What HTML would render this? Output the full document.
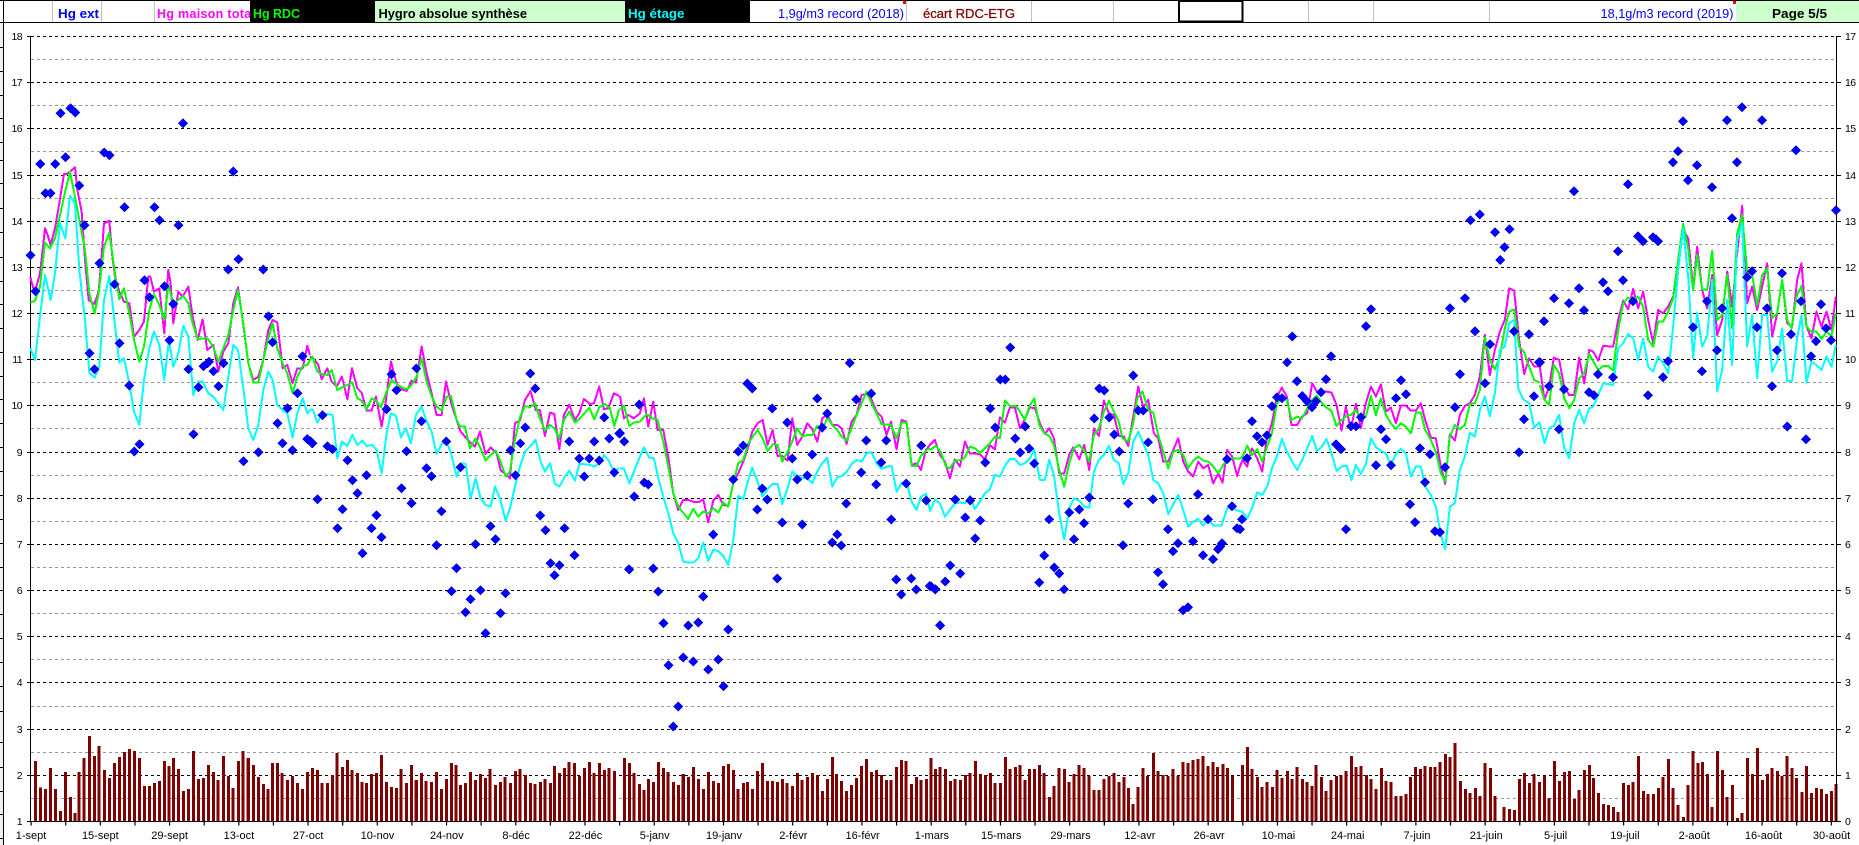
<!DOCTYPE html>
<html lang="fr"><head><meta charset="utf-8"><title>Hygro absolue synthèse</title>
<style>
html,body{margin:0;padding:0;background:#fff;overflow:hidden}
svg{display:block;position:absolute;left:0;top:0}
text{font-family:"Liberation Sans",Arial,sans-serif}
.h{font-size:12.5px;font-weight:bold}
.y{font-size:10.5px;letter-spacing:-.6px;fill:#000}
.x{font-size:11px;fill:#000;text-anchor:middle}
.m{fill:none;stroke:#f0f;stroke-width:6;stroke-linejoin:round}
.g{fill:none;stroke:#0f0;stroke-width:6;stroke-linejoin:round}
.c{fill:none;stroke:#0ff;stroke-width:6;stroke-linejoin:round}
.d{fill:none;stroke:none;marker-start:url(#dm);marker-mid:url(#dm);marker-end:url(#dm)}
</style></head><body>
<svg width="1859" height="845" viewBox="0 0 1859 845" xmlns="http://www.w3.org/2000/svg">
<defs><marker id="dm" markerUnits="userSpaceOnUse" markerWidth="34" markerHeight="34" refX="17" refY="17" orient="0"><polygon points="17,2 32,17 17,32 2,17" fill="#0000f5" shape-rendering="crispEdges"/></marker></defs>
<rect width="1859" height="845" fill="#fff"/>
<!-- left strip -->
<rect x="0" y="23" width="3" height="822" fill="#f0f0f0"/>
<path shape-rendering="crispEdges" stroke="#000" fill="none" d="M3.5 0V845M0 47.5H3M0 71.5H3M0 95.5H3M0 118.5H3M0 142.5H3M0 160.5H3M0 183.5H3M0 208.5H3M0 232.5H3M0 257.5H3M0 281.5H3M0 304.5H3M0 328.5H3M0 352.5H3M0 376.5H3M0 399.5H3M0 423.5H3M0 447.5H3M0 471.5H3M0 495.5H3M0 519.5H3M0 543.5H3M0 567.5H3M0 590.5H3M0 614.5H3M0 638.5H3M0 662.5H3M0 686.5H3M0 711.5H3M0 742.5H3M0 767.5H3M0 791.5H3M0 814.5H3M0 838.5H3"/>
<!-- header -->
<path shape-rendering="crispEdges" stroke="#c0c0c0" fill="none" d="M52.5 0V22M101.5 0V22M154.5 0V22M906.5 0V22M1031.5 0V22M1113.5 0V22M1308.5 0V22M1373.5 0V22M1489.5 0V22"/>
<text class="h" x="58" y="18" fill="#0000ff" textLength="41" lengthAdjust="spacingAndGlyphs">Hg ext</text>
<text class="h" x="157" y="18" fill="#ff00ff" style="letter-spacing:.3px">Hg maison totale</text>
<rect x="250" y="0" width="125" height="22" fill="#000"/>
<rect x="375" y="0" width="250" height="22" fill="#ccffcc"/>
<rect x="625" y="0" width="125" height="22" fill="#000"/>
<rect x="1736" y="0" width="123" height="22" fill="#ccffcc"/>
<text class="h" x="253" y="18" fill="#00ff00" textLength="47" lengthAdjust="spacingAndGlyphs">Hg RDC</text>
<text class="h" x="378.5" y="18" fill="#000" textLength="148.5" lengthAdjust="spacingAndGlyphs">Hygro absolue synthèse</text>
<text class="h" x="628" y="18" fill="#00ffff" textLength="56.5" lengthAdjust="spacingAndGlyphs">Hg étage</text>
<text x="778" y="18" font-size="12.5" fill="#0000ff" textLength="126" lengthAdjust="spacingAndGlyphs">1,9g/m3 record (2018)</text>
<text x="923" y="18" font-size="12.5" fill="#800000" textLength="92" lengthAdjust="spacingAndGlyphs" style="stroke:#800000;stroke-width:.25">écart RDC-ETG</text>
<text x="1600.5" y="18" font-size="12.5" fill="#0000ff" textLength="133" lengthAdjust="spacingAndGlyphs">18,1g/m3 record (2019)</text>
<text class="h" x="1772" y="18" fill="#000" textLength="55" lengthAdjust="spacingAndGlyphs">Page 5/5</text>
<rect x="903" y="0" width="3" height="4" fill="#ff0000"/>
<rect x="1733" y="0" width="3" height="4" fill="#ff0000"/>
<path shape-rendering="crispEdges" stroke="#000" fill="none" d="M0 .5H1859M0 22.5H1859"/>
<rect x="1179" y="1" width="63.5" height="20.5" fill="#fff" stroke="#000" stroke-width="2" shape-rendering="crispEdges"/>
<!-- grid -->
<path shape-rendering="crispEdges" stroke="#999" fill="none" stroke-dasharray="3 3" d="M31 59.5H1836M31 105.5H1836M31 151.5H1836M31 198.5H1836M31 244.5H1836M31 290.5H1836M31 336.5H1836M31 382.5H1836M31 428.5H1836M31 475.5H1836M31 521.5H1836M31 567.5H1836M31 613.5H1836M31 659.5H1836M31 706.5H1836M31 752.5H1836M31 798.5H1836"/>
<path shape-rendering="crispEdges" stroke="#000" fill="none" stroke-dasharray="3 3" d="M31 36.5H1836M31 82.5H1836M31 128.5H1836M31 175.5H1836M31 221.5H1836M31 267.5H1836M31 313.5H1836M31 359.5H1836M31 405.5H1836M31 452.5H1836M31 498.5H1836M31 544.5H1836M31 590.5H1836M31 636.5H1836M31 682.5H1836M31 729.5H1836M31 775.5H1836"/>
<!-- bars -->
<g fill="none" stroke="#800000" shape-rendering="crispEdges">
<path transform="translate(0,700) scale(.3953,.3333)" stroke-width="7.6" d="M90 183V364M103 262V364M115 267V364M128 204V364M141 267V364M153 333V364M166 216V364M178 291V364M190 339V364M200 216V364M213 174V364M226 108V364M239 168V364M251 138V364M264 210V364M277 234V364M290 189V364M302 171V364M315 156V364M327 147V364M340 153V364M353 174V364M365 258V364M378 258V364M391 249V364M403 243V364M416 183V364M428 198V364M439 174V364M452 207V364M464 273V364M477 267V364M489 153V364M502 237V364M515 234V364M527 195V364M540 216V364M552 240V364M565 168V364M578 228V364M590 264V364M603 183V364M615 153V364M628 174V364M641 195V364M654 231V364M666 252V364M678 267V364M689 189V364M702 189V364M714 219V364M727 240V364M740 228V364M752 249V364M765 267V364M778 216V364M790 204V364M803 210V364M815 249V364M828 249V364M841 225V364M853 159V364M866 201V364M879 180V364M891 210V364M904 219V364M916 246V364M927 249V364M940 222V364M952 219V364M965 165V364M978 246V364M990 261V364M1003 264V364M1015 207V364M1028 249V364M1041 195V364M1053 240V364M1066 219V364M1078 243V364M1091 246V364M1104 216V364M1117 267V364M1129 237V364M1142 189V364M1153 195V364M1165 255V364M1177 249V364M1190 216V364M1203 240V364M1215 222V364M1228 234V364M1240 207V364M1253 255V364M1266 246V364M1278 231V364M1291 249V364M1304 213V364M1316 207V364M1329 225V364M1342 249V364M1354 252V364M1367 246V364M1379 237V364M1392 249V364M1403 198V364M1416 219V364M1428 204V364M1440 186V364M1453 189V364M1466 228V364M1478 204V364M1491 186V364M1503 219V364M1516 189V364M1529 210V364M1541 204V364M1554 213V364"/>
<path transform="translate(620,700) scale(.3953,.3333)" stroke-width="7.6" d="M12 174V364M24 189V364M36 219V364M49 252V364M61 270V364M72 237V364M85 246V364M97 186V364M110 204V364M122 216V364M135 246V364M148 255V364M160 222V364M173 231V364M186 201V364M198 237V364M211 267V364M224 216V364M236 243V364M249 249V364M262 198V364M274 192V364M287 210V364M299 267V364M312 249V364M322 246V364M335 267V364M348 213V364M360 189V364M373 243V364M386 243V364M398 246V364M411 237V364M423 249V364M436 258V364M449 219V364M461 240V364M474 231V364M487 219V364M499 225V364M512 273V364M525 237V364M537 171V364M548 222V364M560 243V364M573 273V364M586 255V364M598 234V364M611 198V364M623 177V364M636 216V364M649 210V364M661 225V364M674 240V364M686 240V364M699 201V364M712 180V364M724 183V364M737 252V364M750 231V364M762 240V364M775 237V364M787 174V364M798 207V364M810 201V364M823 207V364M836 243V364M848 237V364M861 240V364M874 225V364M886 219V364M899 183V364M912 222V364M924 225V364M937 219V364M949 249V364M962 249V364M975 171V364M987 207V364M1000 201V364M1012 195V364M1024 240V364M1036 207V364M1048 207V364M1061 195V364M1073 219V364M1086 291V364M1098 258V364M1111 204V364M1124 207V364M1136 246V364M1149 222V364M1161 195V364M1174 204V364M1187 228V364M1199 270V364M1212 270V364M1225 237V364M1237 228V364M1250 219V364M1262 246V364M1275 231V364M1286 264V364M1298 312V364M1311 261V364M1323 204V364M1335 228V364M1349 159V364M1361 213V364M1374 225V364M1386 228V364M1399 207V364M1412 228V364M1424 186V364M1437 189V364M1450 180V364M1462 177V364M1475 168V364M1488 198V364M1500 186V364M1512 201V364M1525 192V364M1537 204V364M1549 228V364"/>
<path transform="translate(1240,700) scale(.3948,.3333)" stroke-width="7.6" d="M6 195V364M19 141V364M31 207V364M44 231V364M56 261V364M69 246V364M82 261V364M94 210V364M107 234V364M120 213V364M132 237V364M145 201V364M158 237V364M170 246V364M183 258V364M193 195V364M206 231V364M218 273V364M231 240V364M244 228V364M256 225V364M269 213V364M282 168V364M294 201V364M307 198V364M320 225V364M332 237V364M345 267V364M358 204V364M370 243V364M383 246V364M395 288V364M408 288V364M420 282V364M432 231V364M444 201V364M457 207V364M469 198V364M482 201V364M494 201V364M507 186V364M520 162V364M532 171V364M545 129V364M558 243V364M571 267V364M583 279V364M596 264V364M608 288V364M621 189V364M634 204V364M646 288V364M669 321V364M682 327V364M695 330V364M708 237V364M720 219V364M733 249V364M745 222V364M758 246V364M771 228V364M783 294V364M796 183V364M809 243V364M822 216V364M834 213V364M847 297V364M859 270V364M872 210V364M885 195V364M896 234V364M908 279V364M921 312V364M933 315V364M946 321V364M958 336V364M971 249V364M984 255V364M996 246V364M1009 168V364M1022 273V364M1034 282V364M1047 282V364M1060 264V364M1072 231V364M1085 177V364M1097 264V364M1110 315V364M1123 351V364M1135 255V364M1147 153V364M1160 189V364M1172 186V364M1184 222V364M1196 321V364M1209 153V364M1222 210V364M1234 291V364M1247 255V364M1260 354V364M1272 339V364M1285 174V364M1298 222V364M1311 144V364M1323 240V364M1336 222V364M1348 204V364M1361 213V364M1373 228V364M1386 168V364M1398 204V364M1410 234V364M1423 276V364M1435 198V364M1447 279V364M1460 264V364M1473 267V364M1485 282V364M1498 273V364M1510 252V364"/>
</g>
<!-- axes -->
<path shape-rendering="crispEdges" stroke="#000" fill="none" d="M30.5 36V822M1836.5 36V822M30 821.5H1837M27 36.5H31M27 82.5H31M27 128.5H31M27 175.5H31M27 221.5H31M27 267.5H31M27 313.5H31M27 359.5H31M27 405.5H31M27 452.5H31M27 498.5H31M27 544.5H31M27 590.5H31M27 636.5H31M27 682.5H31M27 729.5H31M27 775.5H31M27 821.5H31M1836 36.5H1841M1836 82.5H1841M1836 128.5H1841M1836 175.5H1841M1836 221.5H1841M1836 267.5H1841M1836 313.5H1841M1836 359.5H1841M1836 405.5H1841M1836 452.5H1841M1836 498.5H1841M1836 544.5H1841M1836 590.5H1841M1836 636.5H1841M1836 682.5H1841M1836 729.5H1841M1836 775.5H1841M1836 821.5H1841"/>
<path stroke="#000" fill="none" stroke-width="4" stroke-dasharray="1.2 33.42" d="M30.5 823.5H1837"/>
<!-- left labels -->
<g>
<text class="y" x="22" y="40" text-anchor="end">18</text><text class="y" x="22" y="86" text-anchor="end">17</text><text class="y" x="22" y="132" text-anchor="end">16</text><text class="y" x="22" y="179" text-anchor="end">15</text><text class="y" x="22" y="225" text-anchor="end">14</text><text class="y" x="22" y="271" text-anchor="end">13</text><text class="y" x="22" y="317" text-anchor="end">12</text><text class="y" x="22" y="363" text-anchor="end">11</text><text class="y" x="22" y="409" text-anchor="end">10</text><text class="y" x="22" y="456" text-anchor="end">9</text><text class="y" x="22" y="502" text-anchor="end">8</text><text class="y" x="22" y="548" text-anchor="end">7</text><text class="y" x="22" y="594" text-anchor="end">6</text><text class="y" x="22" y="640" text-anchor="end">5</text><text class="y" x="22" y="686" text-anchor="end">4</text><text class="y" x="22" y="733" text-anchor="end">3</text><text class="y" x="22" y="779" text-anchor="end">2</text><text class="y" x="22" y="825" text-anchor="end">1</text>
</g>
<!-- right labels -->
<g>
<text class="y" x="1845" y="40">17</text><text class="y" x="1845" y="86">16</text><text class="y" x="1845" y="132">15</text><text class="y" x="1845" y="179">14</text><text class="y" x="1845" y="225">13</text><text class="y" x="1845" y="271">12</text><text class="y" x="1845" y="317">11</text><text class="y" x="1845" y="363">10</text><text class="y" x="1845" y="409">9</text><text class="y" x="1845" y="456">8</text><text class="y" x="1845" y="502">7</text><text class="y" x="1845" y="548">6</text><text class="y" x="1845" y="594">5</text><text class="y" x="1845" y="640">4</text><text class="y" x="1845" y="686">3</text><text class="y" x="1845" y="733">2</text><text class="y" x="1845" y="779">1</text><text class="y" x="1845" y="825">0</text>
</g>
<!-- x labels -->
<g>
<text class="x" x="31" y="839">1-sept</text><text class="x" x="100.3" y="839">15-sept</text><text class="x" x="169.6" y="839">29-sept</text><text class="x" x="238.9" y="839">13-oct</text><text class="x" x="308.2" y="839">27-oct</text><text class="x" x="377.5" y="839">10-nov</text><text class="x" x="446.8" y="839">24-nov</text><text class="x" x="516.1" y="839">8-déc</text><text class="x" x="585.4" y="839">22-déc</text><text class="x" x="654.7" y="839">5-janv</text><text class="x" x="724" y="839">19-janv</text><text class="x" x="793.3" y="839">2-févr</text><text class="x" x="862.6" y="839">16-févr</text><text class="x" x="931.9" y="839">1-mars</text><text class="x" x="1001.2" y="839">15-mars</text><text class="x" x="1070.5" y="839">29-mars</text><text class="x" x="1139.8" y="839">12-avr</text><text class="x" x="1209.1" y="839">26-avr</text><text class="x" x="1278.4" y="839">10-mai</text><text class="x" x="1347.7" y="839">24-mai</text><text class="x" x="1417" y="839">7-juin</text><text class="x" x="1486.3" y="839">21-juin</text><text class="x" x="1555.6" y="839">5-juil</text><text class="x" x="1624.9" y="839">19-juil</text><text class="x" x="1694.2" y="839">2-août</text><text class="x" x="1763.5" y="839">16-août</text><text class="x" x="1831.5" y="839">30-août</text>
</g>
<!-- series -->
<g shape-rendering="crispEdges">
<g transform="scale(.3333) translate(0,480)">
<polyline class="m" points="91,352 100,385 108,385 120,340 128,270 135,205 143,225 152,255 165,205 178,130 192,42 200,42 210,35 225,22 232,90 245,155 255,300 266,420 283,432 296,395 305,290 312,190 328,182 337,290 345,350 358,395 372,425 388,430 402,530 418,510 432,485 445,350 451,350 462,395 478,385 493,520 505,330 512,370 520,490 535,395 548,410 565,380 578,470 593,540 608,478 622,570 640,555 655,635 670,575 685,550 700,430 714,382 728,480 745,610 760,660 775,650 790,600 805,510 818,480 832,488 848,625 862,615 878,670 892,625 908,625 922,558 930,585"/>
<polyline class="g" points="91,428 105,422 120,380 135,248 150,265 165,235 178,175 192,110 210,35 225,110 240,190 255,270 268,400 284,460 296,400 312,260 328,218 345,340 358,418 372,385 388,460 402,540 418,605 432,560 448,450 462,402 478,435 493,480 505,375 520,430 535,420 550,408 565,430 578,490 593,537 622,535 640,560 655,605 685,525 700,450 714,390 730,490 745,610 760,668 775,668 790,600 805,535 818,490 832,565 848,610 862,640 878,700 892,650 908,618 922,615 930,600"/>
<polyline class="c" points="91,565 105,600 120,470 135,345 152,420 165,340 180,190 196,235 210,108 225,130 238,330 255,480 268,638 284,653 298,620 312,420 328,348 342,470 358,608 372,595 388,670 402,755 418,795 432,660 448,565 462,515 478,555 493,660 507,540 520,620 535,580 550,498 565,530 580,705 595,665 608,665 625,700 640,710 670,750 685,650 700,555 714,570 728,670 745,805 760,840 775,795 790,690 805,635 818,660 832,735 848,750 862,760 878,833 892,760 908,715 922,760 930,750"/>
<polyline class="d" points="91,286 107,394 121,12 166,12 136,100 152,100 238,77 253,196 298,310 343,373 268,580 283,628 358,550 373,142 388,677 403,875 418,853 433,361 448,412 463,142 478,181 493,379 508,541 520,432 535,196 565,628 580,823 595,682 610,619 622,610 627,605 640,634 655,679 670,610 685,329 700,35 715,298 730,904 775,877 790,329 805,469 817,547 832,790 847,850 862,745 877,871 892,700 907,589 922,837 931,844 938,850"/>
<polyline class="d" points="181,-140 211,-155 226,-142 549,-110 196,-8 313,-22 329,-14"/>
</g>
<g transform="scale(.3333) translate(930,990)">
<polyline class="m" points="0,80 10,85 25,105 35,148 52,115 65,155 80,170 96,140 112,208 126,115 142,175 155,188 170,242 185,242 198,200 215,290 228,210 243,95 260,160 275,178 290,183 305,152 318,158 335,50 350,130 365,190 380,255 395,255 408,155 425,225 440,270 452,305 478,335 495,350 510,305 527,372 542,352 560,370 572,420 600,445 615,280 630,272 645,210 662,183 677,240 690,240 705,318 720,248 733,252 748,358 762,255 778,225 795,270 808,250 822,207 840,222 852,220 868,170 882,238 895,235 912,190 928,198"/>
<polyline class="g" points="0,90 8,80 22,125 35,132 52,135 65,120 82,180 96,172 112,165 127,157 142,205 155,212 170,238 185,205 198,212 213,232 228,190 245,150 260,162 275,172 290,178 305,165 320,140 335,85 350,155 365,200 380,230 395,242 410,200 423,198 440,270 450,290 465,290 480,355 497,325 512,355 527,392 542,375 557,362 572,395 587,440 600,425 615,330 630,262 645,228 660,232 675,220 690,265 705,302 720,285 733,295 748,325 762,270 778,245 795,278 810,265 825,248 838,233 853,268 868,232 885,222 900,235 913,288 928,238"/>
<polyline class="c" points="0,240 8,238 22,278 38,250 68,255 82,385 96,335 112,348 127,315 142,345 157,332 170,348 187,345 200,360 215,430 230,310 243,250 258,258 273,322 288,295 303,340 318,255 335,230 350,275 365,305 380,372 395,342 410,335 423,370 440,440 455,400 467,402 482,505 497,445 512,505 527,525 542,530 555,470 570,505 587,572 600,535 615,470 630,410 645,365 660,350 677,330 692,395 705,425 720,400 735,462 748,470 765,440 778,422 795,452 808,402 825,403 840,405 853,410 868,400 882,375 895,390 912,425 928,415"/>
<polyline class="d" points="6,340 22,508 37,256 52,349 67,358 82,595 97,538 112,391 127,451 142,490 157,670 169,436 184,595 199,556 214,622 229,238 244,133 259,181 274,475 289,364 304,520 319,115 334,274 349,415 364,439 379,646 394,544 409,334 424,784 439,715 451,412 466,847 481,808 496,643 511,781 526,910 541,589 556,628 571,850 586,790 601,361 616,436 631,340 646,292 661,130 676,175 691,556 706,601 721,700 733,736 748,706 763,595 778,334 793,676 808,385 823,439 838,385 853,334 868,391 883,262 898,325 913,427 928,310 943,334 957,718"/>
</g>
<g transform="scale(.3333) translate(1860,1110)">
<polyline class="m" points="0,78 12,145 25,135 42,145 60,130 72,85 85,170 100,95 113,180 130,180 145,260 160,370 175,420 190,390 205,390 222,396 237,396 250,388 265,457 280,392 295,375 310,405 325,408 340,340 355,310 370,275 385,230 397,185 413,160 428,150 443,225 458,180 473,258 487,258 503,272 517,145 532,225 547,200 562,160 577,178 592,215 607,145 622,135 637,165 652,165 665,175 680,222 695,155 710,135 725,75 740,72 755,90 770,125 785,140 800,195 813,155 830,238 845,150 860,155 875,285 890,280 903,300 918,240 930,225"/>
<polyline class="g" points="0,118 12,108 28,168 42,158 60,155 80,133 97,145 113,150 130,215 145,290 160,370 175,410 205,447 220,417 235,440 250,425 265,430 280,415 295,428 310,398 325,410 340,340 355,280 370,270 385,220 413,180 428,205 443,243 460,222 473,225 487,275 503,245 517,215 532,175 547,200 562,195 577,195 592,168 607,185 622,142 637,165 652,180 665,200 680,212 695,175 710,135 725,100 740,65 755,100 770,130 785,163 800,163 813,165 830,205 845,158 860,158 875,288 890,288 903,258 918,242 930,235"/>
<polyline class="c" points="0,296 12,296 28,340 42,305 58,265 72,232 87,262 102,265 115,325 130,380 145,430 160,490 175,520 190,575 205,578 220,578 235,565 250,518 265,573 280,540 295,543 310,558 325,585 340,510 355,378 370,387 385,330 397,293 413,335 428,380 445,355 458,342 473,342 487,402 503,355 517,305 532,318 548,325 562,323 577,340 592,305 607,280 622,263 637,350 652,322 667,318 682,303 697,280 712,270 725,275 740,250 755,247 770,280 785,297 800,290 815,288 830,365 845,340 860,335 875,395 890,420 903,380 918,372 930,420"/>
<polyline class="d" points="0,190 13,214 28,598 43,379 58,103 73,337 85,344 100,595 115,664 130,760 145,886 160,1070 175,1010 190,862 205,766 220,874 235,757 250,679 265,898 280,493 295,868 310,949 325,778 340,328 355,244 370,226 382,40 397,55 412,418 427,355 442,388 457,115 472,625 487,457 502,157 517,265 532,328 547,463 562,316 577,253 592,85 607,172 622,130 637,517 652,493 664,526 679,400 690,-21 709,88 724,307 739,211 754,70 769,343 784,277 799,211 814,448 829,628 844,673 859,340 874,625 889,658 904,226 919,391 934,649 947,658 960,766"/>
</g>
<g transform="scale(.3333) translate(2790,990)">
<polyline class="m" points="0,345 15,330 30,375 45,395 60,445 75,388 90,410 105,335 120,370 150,372 165,390 180,345 195,358 210,262 225,278 240,232 255,232 270,295 285,268 300,232 315,235 330,280 345,312 358,295 372,325 388,430 403,430 418,375 430,352 448,388 463,345 478,420 492,295 507,318 522,212 537,250 552,255 567,318 582,320 595,348 610,260 625,170 640,232 655,210 672,310 685,325 700,395 715,395 730,360 745,325 760,395 775,425 790,440 805,395 820,415 835,405 850,460 865,430 878,458 892,360 907,380 922,438 930,410"/>
<polyline class="g" points="0,360 18,348 32,365 48,410 60,415 75,392 95,390 105,382 120,350 135,355 150,370 180,340 195,320 210,325 225,212 240,228 258,228 270,245 285,270 298,230 313,205 328,285 343,310 358,318 372,345 388,420 403,470 418,400 432,355 448,345 463,362 478,395 492,315 507,295 522,245 537,212 552,245 565,270 578,325 595,335 610,280 622,205 638,185 655,240 670,248 685,315 700,365 715,415 730,365 745,360 760,375 775,415 790,392 805,380 820,392 835,395 850,410 865,430 880,405 895,385 930,385"/>
<polyline class="c" points="0,545 15,508 30,520 45,560 60,540 75,520 90,518 105,520 120,498 135,537 150,515 165,490 180,478 195,435 210,440 225,408 240,387 255,387 270,405 285,400 300,385 313,360 330,450 345,450 358,390 372,435 388,550 403,628 418,535 432,505 448,512 463,530 478,533 492,425 507,390 522,375 537,348 552,390 567,400 580,462 595,430 610,335 625,305 640,340 655,375 670,450 685,460 700,490 715,552 745,495 760,540 775,590 790,575 805,567 820,587 835,565 850,587 875,587 892,535 907,533 922,542 930,544"/>
<polyline class="d" points="0,768 16,778 31,886 46,754 61,706 76,508 91,730 106,562 121,511 136,625 151,571 166,397 181,235 196,292 211,148 226,148 241,52 256,325 271,367 286,289 298,355 313,400 328,757 343,676 358,568 373,712 388,730 403,778 418,547 433,628 448,538 463,580 478,502 493,265 508,175 523,181 538,262 553,313 568,364 580,646 595,520 610,136 625,241 640,241 655,337 670,508 685,727 700,763 715,598 730,664 745,640 760,841 775,832 790,634 805,493 820,676 835,568 850,688 865,658 871,650 877,640 892,388 907,529 922,595 937,568 952,385"/>
</g>
<g transform="scale(.3333) translate(3720,780)">
<polyline class="m" points="0,620 8,600 22,620 36,565 52,595 67,635 80,540 96,490 111,410 126,383 141,410 155,495 172,495 186,470 202,460 217,370 231,395 246,395 260,395 275,398 290,435 305,512 318,440 333,510 348,432 363,505 378,430 393,380 408,410 423,373 438,455 453,443 468,490 483,437 498,437 513,452 528,452 543,430 556,480 573,533 588,535 603,620 616,672 630,523 645,542 660,465 675,438 690,430 705,405 720,350 735,225 750,345 765,270 780,215 795,180 808,85 823,92 838,240 853,342 868,295 883,320 900,320"/>
<polyline class="g" points="0,597 8,590 22,557 36,585 52,568 67,605 82,560 96,520 111,430 126,415 141,420 155,480 172,470 186,476 202,445 217,420 231,407 246,430 260,443 275,453 290,498 305,480 320,468 333,465 348,450 363,478 378,470 393,408 408,465 423,415 438,465 453,490 468,507 483,490 498,500 513,520 528,458 543,458 556,510 573,540 588,575 603,640 616,665 630,530 645,495 660,508 675,495 690,432 705,430 720,390 735,232 750,300 765,328 780,290 795,205 808,155 823,148 838,260 853,277 868,320 883,360 900,368"/>
<polyline class="c" points="0,755 8,755 22,775 36,745 52,697 67,705 82,680 96,625 111,590 126,537 141,575 157,605 172,630 187,600 202,565 217,528 231,573 246,560 260,537 275,580 290,633 305,620 320,617 335,660 348,615 363,642 378,612 393,535 408,562 423,572 438,580 453,615 468,582 483,567 498,580 513,650 528,620 543,620 556,680 573,705 588,740 603,825 616,867 630,740 645,730 660,630 675,590 690,518 705,530 720,450 735,410 750,468 765,400 780,270 795,260 808,190 823,180 835,385 850,418 868,430 883,503 900,485"/>
<polyline class="d" points="0,808 7,778 22,595 37,484 52,529 67,547 82,526 97,439 112,412 127,415 142,307 157,229 172,364 187,408 202,424 217,442 229,424 244,397 259,358 274,289 289,553 304,568 319,808 334,499 349,499 364,472 379,199 394,148 409,616 424,508 439,538 454,616 469,415 484,361 499,403 511,733 526,787 541,565 556,667 571,583 586,814 601,817 616,622 631,145 646,442 661,343 676,115 692,-119 706,214 720,-136 736,370 751,253 766,-83 781,0 794,-38 809,-92 823,214 838,577 853,478 868,223 883,409 898,307"/>
</g>
<g transform="scale(.3333) translate(4620,270)">
<polyline class="m" points="0,830 14,930 28,890 42,803 58,810 73,890 88,915 103,915 118,803 133,880 148,780 160,785 175,812 190,768 220,770 235,690 250,632 265,658 280,597 295,655 310,605 325,690 340,760 355,660 370,670 385,650 400,620 415,510 430,420 445,445 460,595 472,470 487,600 502,655 517,555 532,735 547,690 562,545 577,650 592,490 607,347 622,640 637,590 652,660 667,590 682,520 697,740 712,670 727,570 742,700 757,710 772,570 785,520 800,710 815,745 830,665 845,710 860,665 875,720 888,620"/>
<polyline class="g" points="0,885 14,930 28,945 42,825 58,850 73,925 88,955 103,930 118,865 133,850 148,792 175,840 190,828 205,828 220,842 235,720 250,640 265,623 280,630 295,620 310,650 325,750 340,770 355,695 370,695 385,665 400,625 415,510 430,402 445,475 460,600 472,495 487,598 502,600 517,482 532,690 547,675 562,555 577,715 592,430 607,375 622,545 637,555 652,645 667,555 682,535 697,685 712,670 727,570 742,690 755,715 770,620 785,588 800,710 815,725 830,725 845,747 860,725 875,738 888,670"/>
<polyline class="c" points="0,1000 14,1060 28,1015 42,1008 58,975 73,1075 88,1105 103,1000 118,960 133,1000 148,955 160,950 190,880 220,885 235,775 250,760 265,732 280,745 295,810 310,745 325,830 340,845 355,800 370,820 385,850 400,710 415,540 430,415 445,560 460,805 472,668 487,770 502,740 517,570 532,903 547,840 562,630 577,825 592,450 607,400 622,770 637,675 652,865 667,675 682,675 697,845 712,815 727,715 742,873 757,873 772,745 785,675 800,878 815,815 830,825 845,840 860,800 875,830 888,765"/>
<polyline class="d" points="0,817 13,694 28,889 43,625 58,1018 73,898 88,640 103,304 118,595 133,661 148,907 163,916 175,853 190,577 205,604 220,862 235,484 250,571 265,283 280,634 295,439 310,454 325,916 340,442 348,448 355,454 370,862 385,814 400,217 415,184 430,94 445,271 460,712 472,226 487,844 502,634 517,292 532,781 547,655 562,91 577,385 592,217 607,52 622,562 637,544 652,712 667,91 682,655 697,889 712,781 727,550 742,1010 754,733 769,181 784,634 799,1048 814,799 829,754 844,643 859,715 874,751 888,361"/>
</g>
</g>
</svg>
</body></html>
